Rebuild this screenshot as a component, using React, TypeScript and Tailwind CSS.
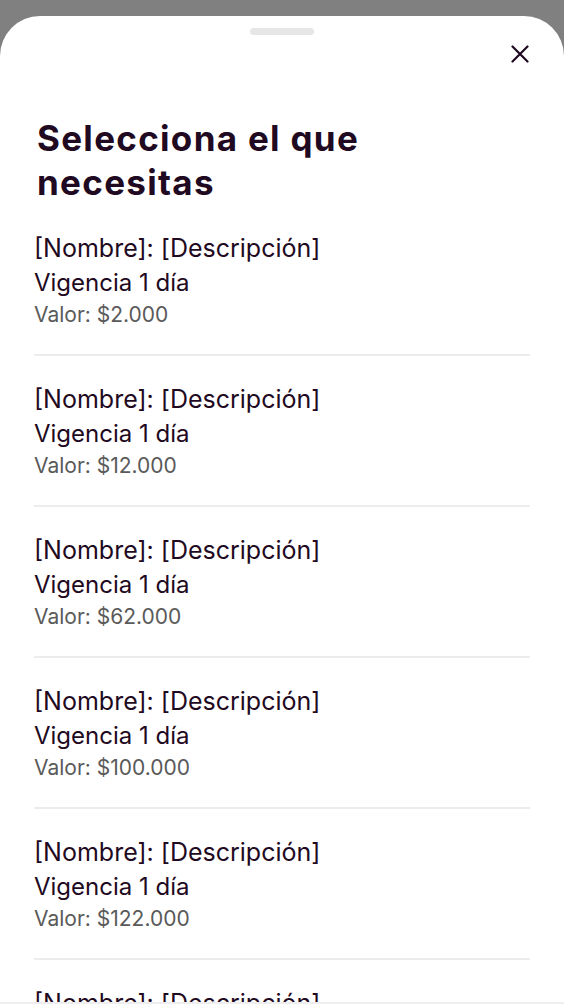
const items = ['$2.000', '$12.000', '$62.000', '$100.000', '$122.000', '$150.000'];

function CloseIcon() {
  return (
    <svg width="18" height="18" viewBox="0 0 18 18" fill="none" stroke="#1f0a22" strokeWidth="2.2" strokeLinecap="round">
      <path d="M1.5 1.5 16.5 16.5M16.5 1.5 1.5 16.5" />
    </svg>
  );
}

function Item({ price }: { price: string }) {
  return (
    <div className="flex flex-col">
      <div className="pt-[25px] pb-[24px]">
        <p className="text-[25px] leading-[36px] text-[#1f0a22]">[Nombre]: [Descripción]</p>
        <p className="text-[24px] leading-[34px] text-[#1f0a22]">Vigencia 1 día</p>
        <p className="text-[21px] leading-[30px] text-[#5a5a5a]">Valor: {price}</p>
      </div>
      <div className="h-[2px] bg-[#ececec]" />
    </div>
  );
}

export default function App() {
  return (
    <div className="flex h-screen flex-col bg-[#808080] pt-4 font-['Inter',sans-serif]">
      <div className="flex flex-1 flex-col overflow-hidden rounded-t-[40px] bg-white">
        <div className="flex justify-center pt-3">
          <div className="h-[7px] w-[64px] rounded-full bg-[#e6e6e6]" />
        </div>
        <div className="mt-[10px] flex justify-end pr-[35px]">
          <button className="flex">
            <CloseIcon />
          </button>
        </div>
        <h1 className="mt-[53px] pl-[37px] text-[35px] leading-[44px] font-bold tracking-[1.3px] text-[#1f0a22]">
          Selecciona el que
          <br />
          necesitas
        </h1>
        <div className="mt-[1px] flex flex-col px-[34px]">
          {items.map((p) => (
            <Item key={p} price={p} />
          ))}
        </div>
      </div>
      <div className="h-[2px] bg-[#eeeeee]" />
    </div>
  );
}
